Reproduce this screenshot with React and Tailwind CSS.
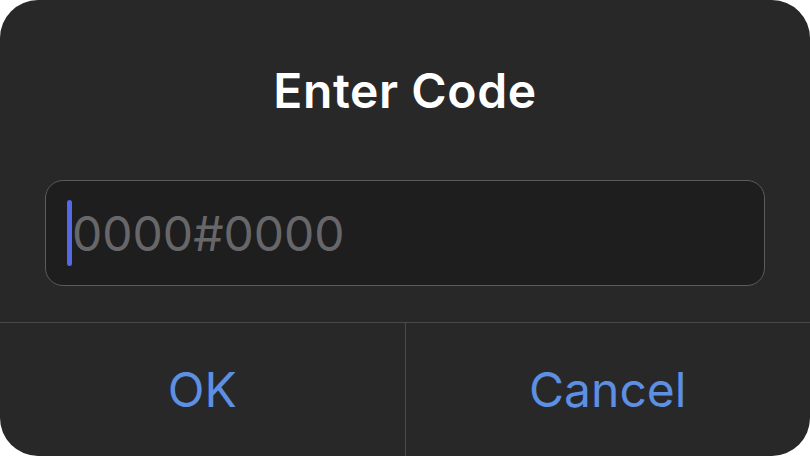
import React from 'react';

const App = () => {
  return (
    <div className="w-[810px] h-[456px] bg-white" style={{ fontFamily: 'Inter, "Noto Sans", sans-serif' }}>
      <div className="w-full h-full bg-[#282828] rounded-[38px] flex flex-col overflow-hidden">
        <div className="h-[180px] flex items-start justify-center pt-[60px]">
          <h1 className="text-white text-[48px] leading-[62px] font-semibold tracking-[0.6px]">Enter Code</h1>
        </div>

        <div className="mx-[45px] h-[106px] rounded-[18px] border border-[#5c5c5e] bg-[#1e1e1f] flex items-center pl-[21px]">
          <div className="w-[5px] h-[66px] rounded-full bg-[#5468e8]" />
          <span className="text-[#67676a] text-[48px] leading-none pt-[2px]">0000#0000</span>
        </div>

        <div className="h-[36px]" />

        <div className="flex-1 flex border-t border-[#4a4a4c]">
          <button className="flex-1 flex items-center justify-center text-[#5d8fe2] text-[48px]">OK</button>
          <button className="flex-1 flex items-center justify-center text-[#5d8fe2] text-[48px] border-l border-[#4a4a4c]">Cancel</button>
        </div>
      </div>
    </div>
  );
};

export default App;
